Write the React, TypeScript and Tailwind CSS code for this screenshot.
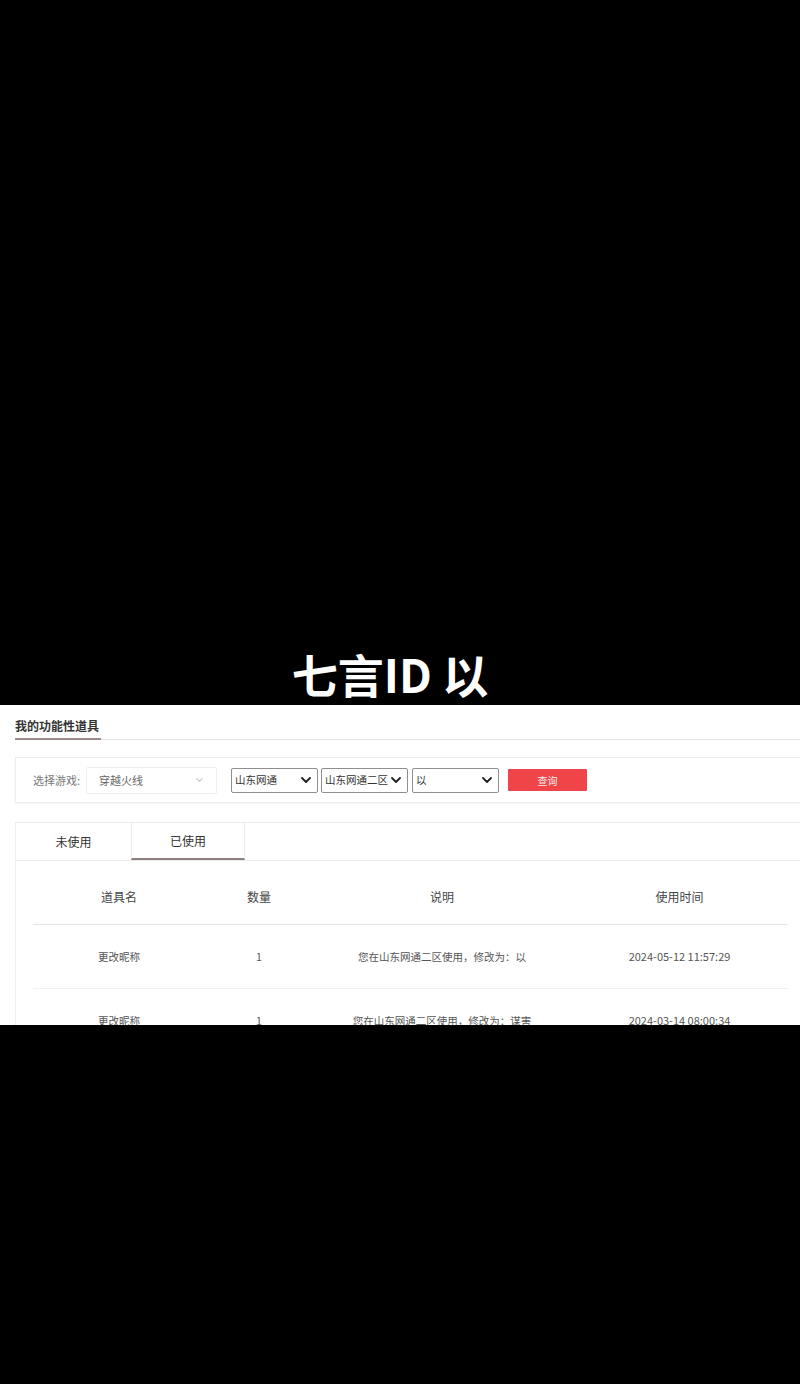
const rows = [
  { name: "更改昵称", count: "1", desc: "您在山东网通二区使用，修改为：以", time: "2024-05-12 11:57:29" },
  { name: "更改昵称", count: "1", desc: "您在山东网通二区使用，修改为：谋害", time: "2024-03-14 08:00:34" },
];

function Chevron({ className }: { className?: string }) {
  return (
    <svg viewBox="0 0 10 6" className={className} fill="none">
      <path d="M1 1l4 4 4-4" stroke="currentColor" strokeWidth="1.8" strokeLinecap="round" strokeLinejoin="round" />
    </svg>
  );
}

function FakeSelect({ label, width }: { label: string; width: string }) {
  return (
    <div
      className={`flex h-[25px] ${width} items-center justify-between whitespace-nowrap rounded-[2px] border border-[#8f8f8f] bg-white pl-[3px] pr-[6px] text-[10.5px] text-[#333]`}
    >
      <span>{label}</span>
      <Chevron className="h-[6px] w-[10px] shrink-0 text-[#222]" />
    </div>
  );
}

export default function App() {
  return (
    <div className="flex h-[1384px] w-[800px] flex-col bg-black font-['Noto_Sans_CJK_SC',sans-serif]">
      <div className="flex h-[705px] items-end justify-center pb-[9px] pr-[20px]">
        <h1 className="text-[46px] font-bold leading-none text-white">七言ID 以</h1>
      </div>

      <div className="h-[320px] overflow-hidden bg-white pl-[15px] pt-[13px]">
        {/* heading */}
        <div className="flex border-b border-[#e6e6e6]">
          <div className="-mb-px border-b-2 border-[#9c8a8a] pb-[4px] pr-[2px] text-[12px] font-bold leading-[16px] text-[#333]">
            我的功能性道具
          </div>
        </div>

        {/* filter bar */}
        <div className="mr-[-20px] mt-[17px] flex h-[46px] items-center border border-[#ececec] pl-[17px] shadow-[0_1px_2px_rgba(0,0,0,0.04)]">
          <span className="w-[53px] text-[11px] text-[#777]">选择游戏:</span>
          <div className="flex h-[27px] w-[131px] items-center justify-between rounded-[2px] border border-[#eeeeee] pl-[12px] pr-[13px] text-[11px] text-[#666]">
            <span>穿越火线</span>
            <Chevron className="h-[4px] w-[7px] text-[#c8c8c8]" />
          </div>
          <div className="ml-[14px] flex items-center gap-[3px]">
            <FakeSelect label="山东网通" width="w-[87px]" />
            <FakeSelect label="山东网通二区" width="w-[87px]" />
            <div className="ml-[1px]">
              <FakeSelect label="以" width="w-[87px]" />
            </div>
          </div>
          <button className="ml-[9px] h-[22px] w-[79px] rounded-[1px] bg-[#ef4548] text-[10px] text-white/90">
            查询
          </button>
        </div>

        {/* tabs */}
        <div className="mr-[-20px] mt-[19px] h-[300px] border-l border-t border-[#ececec]">
          <div className="flex h-[38px] border-b border-[#ececec] text-[12px] text-[#333]">
            <div className="flex w-[115px] items-center justify-center">未使用</div>
            <div className="flex w-[114px] items-center justify-center border-x border-b-2 border-x-[#ececec] border-b-[#8e7f7f] bg-white">
              已使用
            </div>
          </div>

          <div className="ml-[17px] w-[755px] pt-[8px]">
            <div className="grid h-[56px] grid-cols-[172px_108px_258px_217px] items-center border-b border-[#e4e4e4] text-center text-[12px] text-[#444]">
              <span>道具名</span>
              <span>数量</span>
              <span>说明</span>
              <span>使用时间</span>
            </div>
            {rows.map((r, i) => (
              <div
                key={i}
                className="grid h-[64px] grid-cols-[172px_108px_258px_217px] items-center border-b border-[#f0f0f0] text-center text-[10.5px] text-[#555]"
              >
                <span>{r.name}</span>
                <span>{r.count}</span>
                <span>{r.desc}</span>
                <span className="text-[11px]">{r.time}</span>
              </div>
            ))}
          </div>
        </div>
      </div>

      <div className="flex-1 bg-black" />
    </div>
  );
}
